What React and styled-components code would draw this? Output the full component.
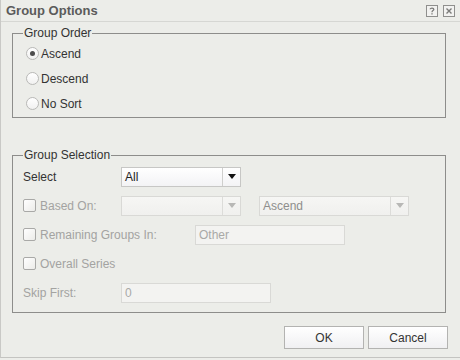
import React from "react";
import styled, { createGlobalStyle } from "styled-components";

const Global = createGlobalStyle`
  html, body { margin: 0; padding: 0; background: #ecede9; }
  body { font-family: "Liberation Sans", Arial, sans-serif; font-size: 12px; color: #333; }
`;

const Dialog = styled.div`
  width: 460px;
  height: 358px;
  box-sizing: border-box;
  background: #ecede9;
  border-left: 1px solid #c9c9c6;
  border-bottom: 1px solid #c4c4c1;
  display: flex;
  flex-direction: column;
`;

const TitleBar = styled.div`
  height: 22px;
  box-sizing: border-box;
  border-bottom: 1px solid #d6d7d3;
  display: flex;
  align-items: center;
  padding: 0 5px 0 5px;
`;

const Title = styled.div`
  flex: 1;
  font-weight: bold;
  font-size: 13px;
  color: #5b5b5b;
  margin-top: -1px;
`;

const IconBtn = styled.svg`
  width: 12px;
  height: 12px;
  margin-left: ${(p) => p.$gap || 0}px;
  margin-top: 1px;
`;

const Body = styled.div`
  flex: 1;
  padding: 4px 14px 0 11px;
  display: flex;
  flex-direction: column;
`;

const Fieldset = styled.fieldset`
  margin: 0;
  margin-top: ${(p) => p.$top || 0}px;
  padding: 0;
  border: 1px solid #8d8d8b;
  min-width: 0;
`;

const Legend = styled.legend`
  margin-left: 10px;
  padding: 0 1px;
  line-height: 14px;
  font-size: 12px;
  color: #333;
`;

const Content = styled.div`
  padding: ${(p) => p.$pad};
  display: flex;
  flex-direction: column;
`;

const Row = styled.div`
  height: ${(p) => p.$h}px;
  display: flex;
  align-items: center;
  color: ${(p) => (p.$disabled ? "#a3a3a1" : "#333")};
`;

const Radio = styled.span`
  width: 13px;
  height: 13px;
  box-sizing: border-box;
  border-radius: 50%;
  border: 1px solid #b9b9b7;
  background: linear-gradient(#ffffff, #f1f1f0);
  display: flex;
  align-items: center;
  justify-content: center;
  margin-right: 2px;
  &::after {
    content: "";
    width: 5px;
    height: 5px;
    border-radius: 50%;
    background: ${(p) => (p.$checked ? "#4d4d4d" : "transparent")};
  }
`;

const Check = styled.span`
  width: 13px;
  height: 13px;
  box-sizing: border-box;
  border-radius: 2px;
  border: 1px solid #a9a9a7;
  background: linear-gradient(135deg, #ffffff, #ecece9);
  margin-right: 4px;
`;

const Label = styled.span`
  width: ${(p) => (p.$w ? p.$w + "px" : "auto")};
  flex-shrink: 0;
`;

const Select = styled.div`
  width: ${(p) => p.$w}px;
  height: 20px;
  box-sizing: border-box;
  margin-left: ${(p) => p.$ml || 0}px;
  border: 1px solid ${(p) => (p.$disabled ? "#d9d9d6" : "#c7c7c5")};
  background: ${(p) =>
    p.$disabled ? "linear-gradient(#f6f6f4, #f0f0ee)" : "linear-gradient(#ffffff, #f3f3f5)"};
  display: flex;
  align-items: stretch;
  color: ${(p) => (p.$disabled ? "#8e8e8c" : "#222")};
`;

const SelectText = styled.span`
  flex: 1;
  padding-left: 3px;
  display: flex;
  align-items: center;
`;

const Arrow = styled.span`
  width: 17px;
  border-left: 1px solid ${(p) => (p.$disabled ? "#dcdcd9" : "#cfcfcd")};
  display: flex;
  align-items: center;
  justify-content: center;
  &::after {
    content: "";
    border-left: 4px solid transparent;
    border-right: 4px solid transparent;
    border-top: 5px solid ${(p) => (p.$disabled ? "#b8b8b6" : "#111")};
  }
`;

const Input = styled.div`
  width: ${(p) => p.$w}px;
  height: 20px;
  box-sizing: border-box;
  margin-left: ${(p) => p.$ml || 0}px;
  border: 1px solid #d9d9d6;
  background: #f3f3f1;
  color: #a9a9a7;
  padding-left: 3px;
  display: flex;
  align-items: center;
`;

const Footer = styled.div`
  flex: 1;
  display: flex;
  justify-content: flex-end;
  align-items: flex-start;
  padding: 13px 12px 0 0;
  gap: 4px;
`;

const Button = styled.button`
  width: 80px;
  height: 23px;
  box-sizing: border-box;
  border: 1px solid #b3b3b1;
  border-radius: 0;
  background: linear-gradient(#ffffff, #f0f0f2);
  font-family: "Liberation Sans", Arial, sans-serif;
  font-size: 12px;
  color: #333;
  padding: 0;
`;

function HelpIcon() {
  return (
    <IconBtn viewBox="0 0 12 12">
      <rect x="0.5" y="0.5" width="11" height="11" fill="#f2f2f0" stroke="#8f8f8d" />
      <path d="M4.2 4.3 C4.2 2.8 7.8 2.8 7.8 4.4 C7.8 5.6 6 5.6 6 7.2" fill="none" stroke="#7b7b79" strokeWidth="1.3" />
      <rect x="5.35" y="8.2" width="1.3" height="1.3" fill="#7b7b79" />
    </IconBtn>
  );
}

function CloseIcon() {
  return (
    <IconBtn viewBox="0 0 12 12" $gap={5}>
      <rect x="0.5" y="0.5" width="11" height="11" fill="#f2f2f0" stroke="#8f8f8d" />
      <path d="M3.5 3.5 L8.5 8.5 M8.5 3.5 L3.5 8.5" stroke="#7b7b79" strokeWidth="1.4" />
    </IconBtn>
  );
}

export default function App() {
  return (
    <>
      <Global />
      <Dialog>
        <TitleBar>
          <Title>Group Options</Title>
          <HelpIcon />
          <CloseIcon />
        </TitleBar>
        <Body>
          <Fieldset>
            <Legend>Group Order</Legend>
            <Content $pad="1px 0 1px 13px">
              <Row $h={25}>
                <Radio $checked />
                <Label>Ascend</Label>
              </Row>
              <Row $h={25}>
                <Radio />
                <Label>Descend</Label>
              </Row>
              <Row $h={25}>
                <Radio />
                <Label>No Sort</Label>
              </Row>
            </Content>
          </Fieldset>
          <Fieldset $top={30}>
            <Legend>Group Selection</Legend>
            <Content $pad="0 0 5px 10px">
              <Row $h={29}>
                <Label $w={98}>Select</Label>
                <Select $w={120}>
                  <SelectText>All</SelectText>
                  <Arrow />
                </Select>
              </Row>
              <Row $h={29} $disabled>
                <Check />
                <Label $w={81}>Based On:</Label>
                <Select $w={120} $disabled>
                  <SelectText />
                  <Arrow $disabled />
                </Select>
                <Select $w={150} $ml={18} $disabled>
                  <SelectText>Ascend</SelectText>
                  <Arrow $disabled />
                </Select>
              </Row>
              <Row $h={29} $disabled>
                <Check />
                <Label $w={155}>Remaining Groups In:</Label>
                <Input $w={150}>Other</Input>
              </Row>
              <Row $h={29} $disabled>
                <Check />
                <Label>Overall Series</Label>
              </Row>
              <Row $h={29} $disabled>
                <Label $w={98}>Skip First:</Label>
                <Input $w={150}>0</Input>
              </Row>
            </Content>
          </Fieldset>
        </Body>
        <Footer>
          <Button>OK</Button>
          <Button>Cancel</Button>
        </Footer>
      </Dialog>
    </>
  );
}
